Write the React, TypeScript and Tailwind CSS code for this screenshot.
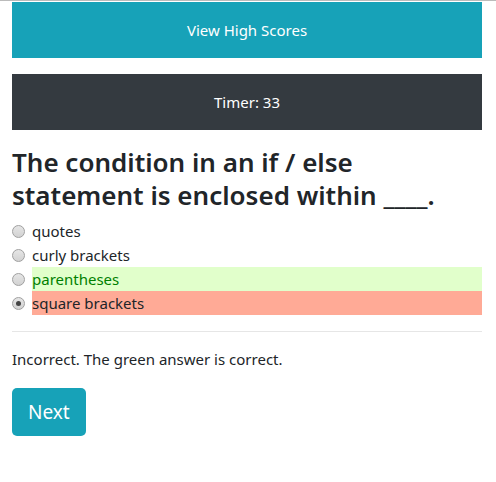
import React from 'react';

type Option = {
  label: string;
  state: 'none' | 'correct' | 'wrong';
  checked?: boolean;
};

const options: Option[] = [
  { label: 'quotes', state: 'none' },
  { label: 'curly brackets', state: 'none' },
  { label: 'parentheses', state: 'correct' },
  { label: 'square brackets', state: 'wrong', checked: true },
];

const Radio = ({ checked }: { checked?: boolean }) => (
  <span className="flex h-[13px] w-[13px] shrink-0 items-center justify-center rounded-full border border-[#a0a0a0] bg-gradient-to-b from-[#e6e6e6] to-[#d2d2d2]">
    {checked && <span className="h-[5px] w-[5px] rounded-full bg-[#444]" />}
  </span>
);

const App = () => {
  return (
    <div className="min-h-[482px] border-t border-[#bbbbbb] bg-white pl-3 pr-3.5 pt-px font-['Noto_Sans',sans-serif] text-[#212529]">
      <button className="flex h-14 w-full items-center justify-center bg-[#17a2b8] text-[15px] text-white">
        View High Scores
      </button>

      <div className="mt-4 flex h-14 items-center justify-center bg-[#343a40] text-[15px] text-white">
        Timer: 33
      </div>

      <h3 className="mt-4 text-[26px] font-semibold leading-[33px]">
        The condition in an if / else statement is enclosed within ____.
      </h3>

      <div className="mt-[7px] flex flex-col">
        {options.map((o) => (
          <label key={o.label} className="flex h-6 items-center gap-[7px] text-[15px]">
            <Radio checked={o.checked} />
            <span
              className={`flex h-6 flex-1 items-center ${
                o.state === 'correct'
                  ? 'bg-[#e1ffcb] text-[#008000]'
                  : o.state === 'wrong'
                    ? 'bg-[#ffaa96]'
                    : ''
              }`}
            >
              {o.label}
            </span>
          </label>
        ))}
      </div>

      <hr className="mt-4 border-[#e6e6e6]" />

      <p className="mt-[15px] text-[15px] leading-6">Incorrect. The green answer is correct.</p>

      <button className="mt-[17px] h-12 rounded-[5px] bg-[#17a2b8] px-4 text-[19px] text-white">
        Next
      </button>
    </div>
  );
};

export default App;
